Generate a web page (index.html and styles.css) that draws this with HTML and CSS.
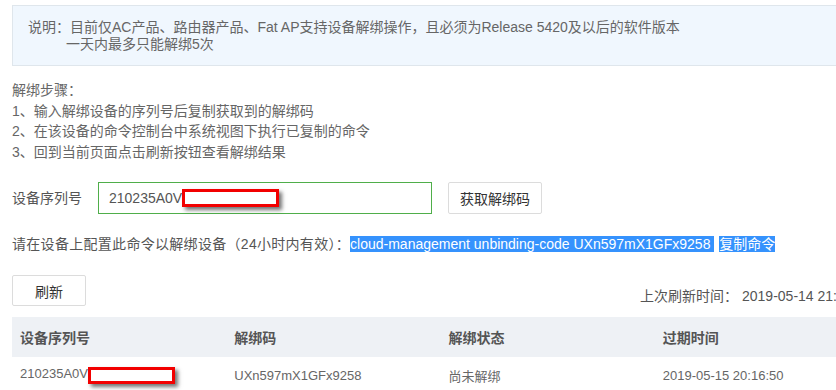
FILE: index.html
```html
<!DOCTYPE html>
<html lang="zh-CN">
<head>
<meta charset="utf-8">
<title>设备解绑</title>
<link rel="stylesheet" href="styles.css">
</head>
<body>
<div class="page">
  <div class="notice">
    <div class="notice-line">说明：目前仅AC产品、路由器产品、Fat AP支持设备解绑操作，且必须为Release 5420及以后的软件版本</div>
    <div class="notice-line indent">一天内最多只能解绑5次</div>
  </div>

  <div class="steps">
    <div>解绑步骤：</div>
    <div>1、输入解绑设备的序列号后复制获取到的解绑码</div>
    <div>2、在该设备的命令控制台中系统视图下执行已复制的命令</div>
    <div>3、回到当前页面点击刷新按钮查看解绑结果</div>
  </div>

  <div class="form-row">
    <span class="label">设备序列号</span>
    <div class="input">210235A0V<span class="redact redact-input"></span></div>
    <button class="btn btn-get">获取解绑码</button>
  </div>

  <div class="command"><span class="prefix">请在设备上配置此命令以解绑设备（24小时内有效）：</span><span class="sel">cloud-management unbinding-code UXn597mX1GFx9258 </span><a class="sel copy">复制命令</a></div>

  <div class="toolbar">
    <button class="btn btn-refresh">刷新</button>
    <span class="last-time">上次刷新时间： 2019-05-14 21:16:50</span>
  </div>

  <table class="grid">
    <thead>
      <tr><th>设备序列号</th><th>解绑码</th><th>解绑状态</th><th>过期时间</th></tr>
    </thead>
    <tbody>
      <tr>
        <td>210235A0V<span class="redact redact-row"></span></td>
        <td>UXn597mX1GFx9258</td>
        <td>尚未解绑</td>
        <td>2019-05-15 20:16:50</td>
      </tr>
    </tbody>
  </table>
</div>
</body>
</html>
```

FILE: styles.css
```css
html, body {
  margin: 0;
  padding: 0;
  overflow: hidden;
  background: #fff;
}
body {
  font-family: "Liberation Sans", "Noto Sans CJK SC", sans-serif;
  font-size: 14px;
  color: #666;
}
.page {
  width: 860px;
  padding: 5px 0 0 12px;
}
.notice {
  box-sizing: border-box;
  height: 61px;
  border: 1px solid #dfe6ec;
  background: #f0f7fe;
  padding: 13px 0 0 15px;
}
.notice-line {
  line-height: 17px;
  white-space: nowrap;
}
.notice-line.indent {
  padding-left: 38px;
}
.steps {
  margin-top: 14px;
  line-height: 20.5px;
}
.form-row {
  margin-top: 20px;
  display: flex;
  align-items: center;
  height: 32px;
}
.label {
  width: 86px;
  color: #555;
  line-height: 20px;
}
.input {
  box-sizing: border-box;
  width: 334px;
  height: 32px;
  border: 1px solid #4fae4a;
  padding-left: 10px;
  display: flex;
  align-items: center;
  color: #555;
}
.redact {
  display: inline-block;
  box-sizing: border-box;
  background: #fff;
  border: 3px solid #f20000;
  box-shadow: 3px 3px 4px rgba(0, 0, 0, 0.55);
}
.redact-input {
  width: 97px;
  height: 18px;
}
.btn {
  box-sizing: border-box;
  font-family: inherit;
  font-size: 14px;
  color: #333;
  background: #fff;
  border: 1px solid #dcdcdc;
  border-radius: 2px;
  padding: 0;
  cursor: pointer;
}
.btn-get {
  margin-left: 16px;
  width: 94px;
  height: 32px;
}
.command {
  margin-top: 20px;
  line-height: 20px;
  white-space: nowrap;
  color: #555;
}
.prefix {
  letter-spacing: 0.3px;
}
.sel {
  background: #3592fd;
  color: #fff;
}
.copy {
  margin-left: 5px;
  text-decoration: none;
}
.toolbar {
  margin-top: 21px;
  display: flex;
  justify-content: space-between;
  align-items: flex-end;
}
.btn-refresh {
  width: 74px;
  height: 31px;
}
.last-time {
  line-height: 20px;
  color: #555;
  white-space: nowrap;
}
.grid {
  margin-top: 11px;
  border-collapse: collapse;
  table-layout: fixed;
  width: 857px;
}
.grid th {
  height: 40px;
  background: #eef1f5;
  text-align: left;
  font-weight: bold;
  font-size: 14px;
  color: #555;
  padding: 0 8px;
}
.grid td {
  height: 36px;
  font-size: 13px;
  color: #666;
  padding: 0 8px;
  white-space: nowrap;
}
.redact-row {
  width: 87px;
  height: 17px;
  vertical-align: middle;
}
```
